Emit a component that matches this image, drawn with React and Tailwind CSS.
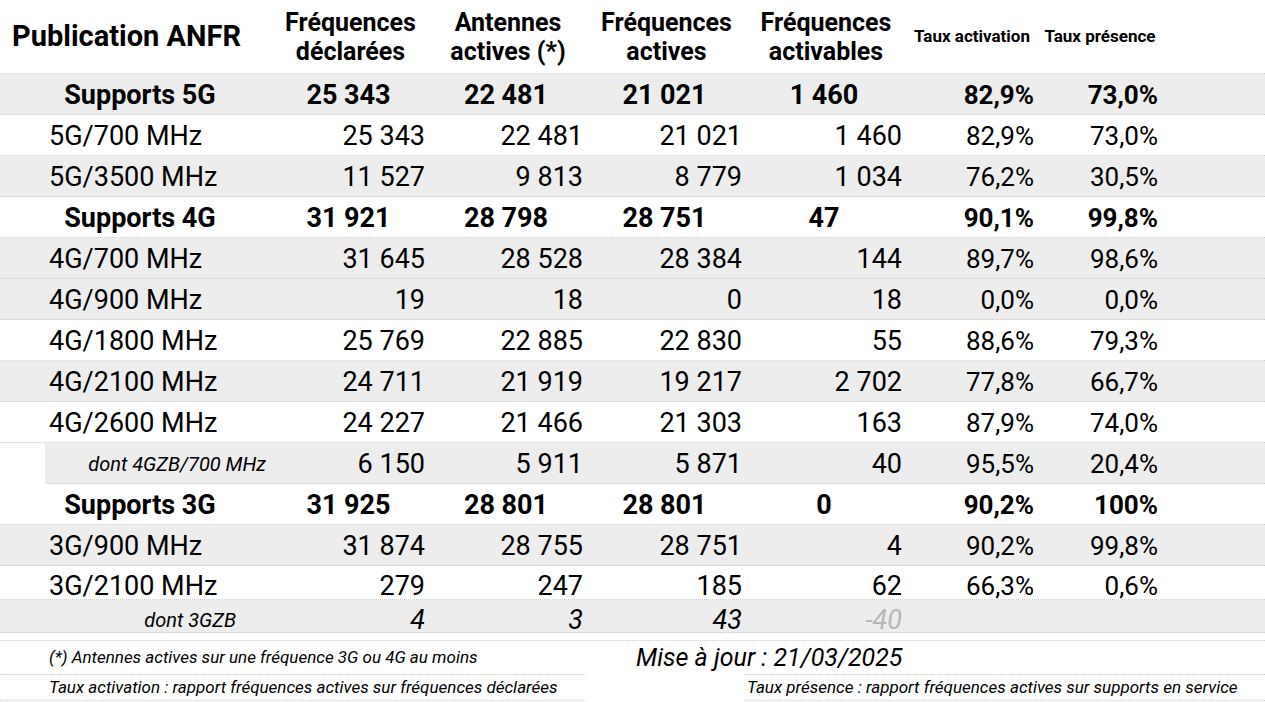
const grid =
  'grid grid-cols-[45px_227px_157px_158px_159px_160px_132px_124px_1fr]';
const line = 'border-b border-dotted border-[#cccccc]';

const rows = [
  { kind: 'group', label: 'Supports 5G', v: ['25 343', '22 481', '21 021', '1 460', '82,9%', '73,0%'], gray: true },
  { label: '5G/700 MHz', v: ['25 343', '22 481', '21 021', '1 460', '82,9%', '73,0%'] },
  { label: '5G/3500 MHz', v: ['11 527', '9 813', '8 779', '1 034', '76,2%', '30,5%'], gray: true },
  { kind: 'group', label: 'Supports 4G', v: ['31 921', '28 798', '28 751', '47', '90,1%', '99,8%'] },
  { label: '4G/700 MHz', v: ['31 645', '28 528', '28 384', '144', '89,7%', '98,6%'], gray: true },
  { label: '4G/900 MHz', v: ['19', '18', '0', '18', '0,0%', '0,0%'], gray: true },
  { label: '4G/1800 MHz', v: ['25 769', '22 885', '22 830', '55', '88,6%', '79,3%'] },
  { label: '4G/2100 MHz', v: ['24 711', '21 919', '19 217', '2 702', '77,8%', '66,7%'], gray: true },
  { label: '4G/2600 MHz', v: ['24 227', '21 466', '21 303', '163', '87,9%', '74,0%'] },
  { kind: 'sub4', label: 'dont 4GZB/700 MHz', v: ['6 150', '5 911', '5 871', '40', '95,5%', '20,4%'], gray: true },
  { kind: 'group', label: 'Supports 3G', v: ['31 925', '28 801', '28 801', '0', '90,2%', '100%'] },
  { label: '3G/900 MHz', v: ['31 874', '28 755', '28 751', '4', '90,2%', '99,8%'], gray: true },
  { label: '3G/2100 MHz', v: ['279', '247', '185', '62', '66,3%', '0,6%'], short: true },
  { kind: 'sub3', label: 'dont 3GZB', v: ['4', '3', '43', '-40', '', ''], gray: true },
];

function Header() {
  const heads = [
    ['Fréquences', 'déclarées'],
    ['Antennes', 'actives (*)'],
    ['Fréquences', 'actives'],
    ['Fréquences', 'activables'],
  ];
  return (
    <div className={`${grid} h-[74px] ${line}`}>
      <div className="col-span-2 flex items-center pl-3 text-[29px] font-bold">Publication ANFR</div>
      {heads.map((h) => (
        <div key={h[0] + h[1]} className="flex flex-col items-center justify-center text-[25px] font-bold leading-[29px]">
          <span>{h[0]}</span>
          <span>{h[1]}</span>
        </div>
      ))}
      <div className="flex items-center justify-center whitespace-nowrap text-[17px] font-bold">Taux activation</div>
      <div className="flex items-center justify-center whitespace-nowrap text-[17px] font-bold">Taux présence</div>
      <div />
    </div>
  );
}

function Row({ r }) {
  const h = r.short ? 'h-[34px]' : r.kind === 'sub3' ? 'h-[33px]' : 'h-[41px]';
  const pad = r.short || r.kind === 'sub3' ? '' : 'pt-px';
  const bg = r.gray ? 'bg-[#ededed]' : 'bg-white';
  if (r.kind === 'group') {
    return (
      <div className={`${grid} ${h} ${bg} ${line} text-[27px] font-bold`}>
        <div className={`col-span-2 flex items-center justify-center pl-2 ${pad}`}>{r.label}</div>
        {r.v.slice(0, 4).map((x, i) => (
          <div key={i} className={`flex items-center justify-center pr-1 ${pad}`}>{x}</div>
        ))}
        {r.v.slice(4).map((x, i) => (
          <div key={i} className={`flex items-center justify-end pr-1 text-[26px] ${pad}`}>{x}</div>
        ))}
        <div />
      </div>
    );
  }
  let label;
  if (r.kind === 'sub4') {
    label = (
      <>
        <div className="bg-white" />
        <div className={`flex items-center justify-end pr-1.5 text-[20px] italic ${pad}`}>{r.label}</div>
      </>
    );
  } else if (r.kind === 'sub3') {
    label = (
      <div className="col-span-2 flex items-center justify-end pr-9 text-[20px] italic">{r.label}</div>
    );
  } else {
    label = (
      <>
        <div />
        <div className={`flex items-center pl-1 text-[27px] ${pad}`}>{r.label}</div>
      </>
    );
  }
  return (
    <div className={`${grid} ${h} ${bg} ${line}`}>
      {label}
      {r.v.map((x, i) => (
        <div
          key={i}
          className={`flex items-center justify-end pr-1 ${i > 3 ? 'text-[26px]' : 'text-[27px]'} ${pad} ${
            r.kind === 'sub3' ? 'italic' : ''
          } ${x.startsWith('-') ? 'text-[#b7b7b7]' : ''}`}
        >
          {x}
        </div>
      ))}
      <div />
    </div>
  );
}

export default function App() {
  return (
    <div className="w-[1265px] h-[702px] overflow-hidden bg-white text-black font-[Roboto,sans-serif]">
      <Header />
      {rows.map((r) => (
        <Row key={r.label} r={r} />
      ))}
      <div className={`h-[8px] ${line}`} />
      <div className="grid grid-cols-[586px_158px_1fr] text-[17px] italic">
        <div className={`h-[34px] flex items-center pl-[49px] whitespace-nowrap ${line}`}>
          (*) Antennes actives sur une fréquence 3G ou 4G au moins
        </div>
        <div className="h-[34px] flex items-center pl-[50px] whitespace-nowrap text-[25px]">
          Mise à jour : 21/03/2025
        </div>
        <div className={`h-[34px] ${line}`} />
        <div className={`h-[26px] flex items-center pl-[49px] whitespace-nowrap ${line}`}>
          Taux activation : rapport fréquences actives sur fréquences déclarées
        </div>
        <div />
        <div className={`h-[26px] flex items-center pl-[3px] whitespace-nowrap ${line}`}>
          Taux présence : rapport fréquences actives sur supports en service
        </div>
      </div>
    </div>
  );
}
